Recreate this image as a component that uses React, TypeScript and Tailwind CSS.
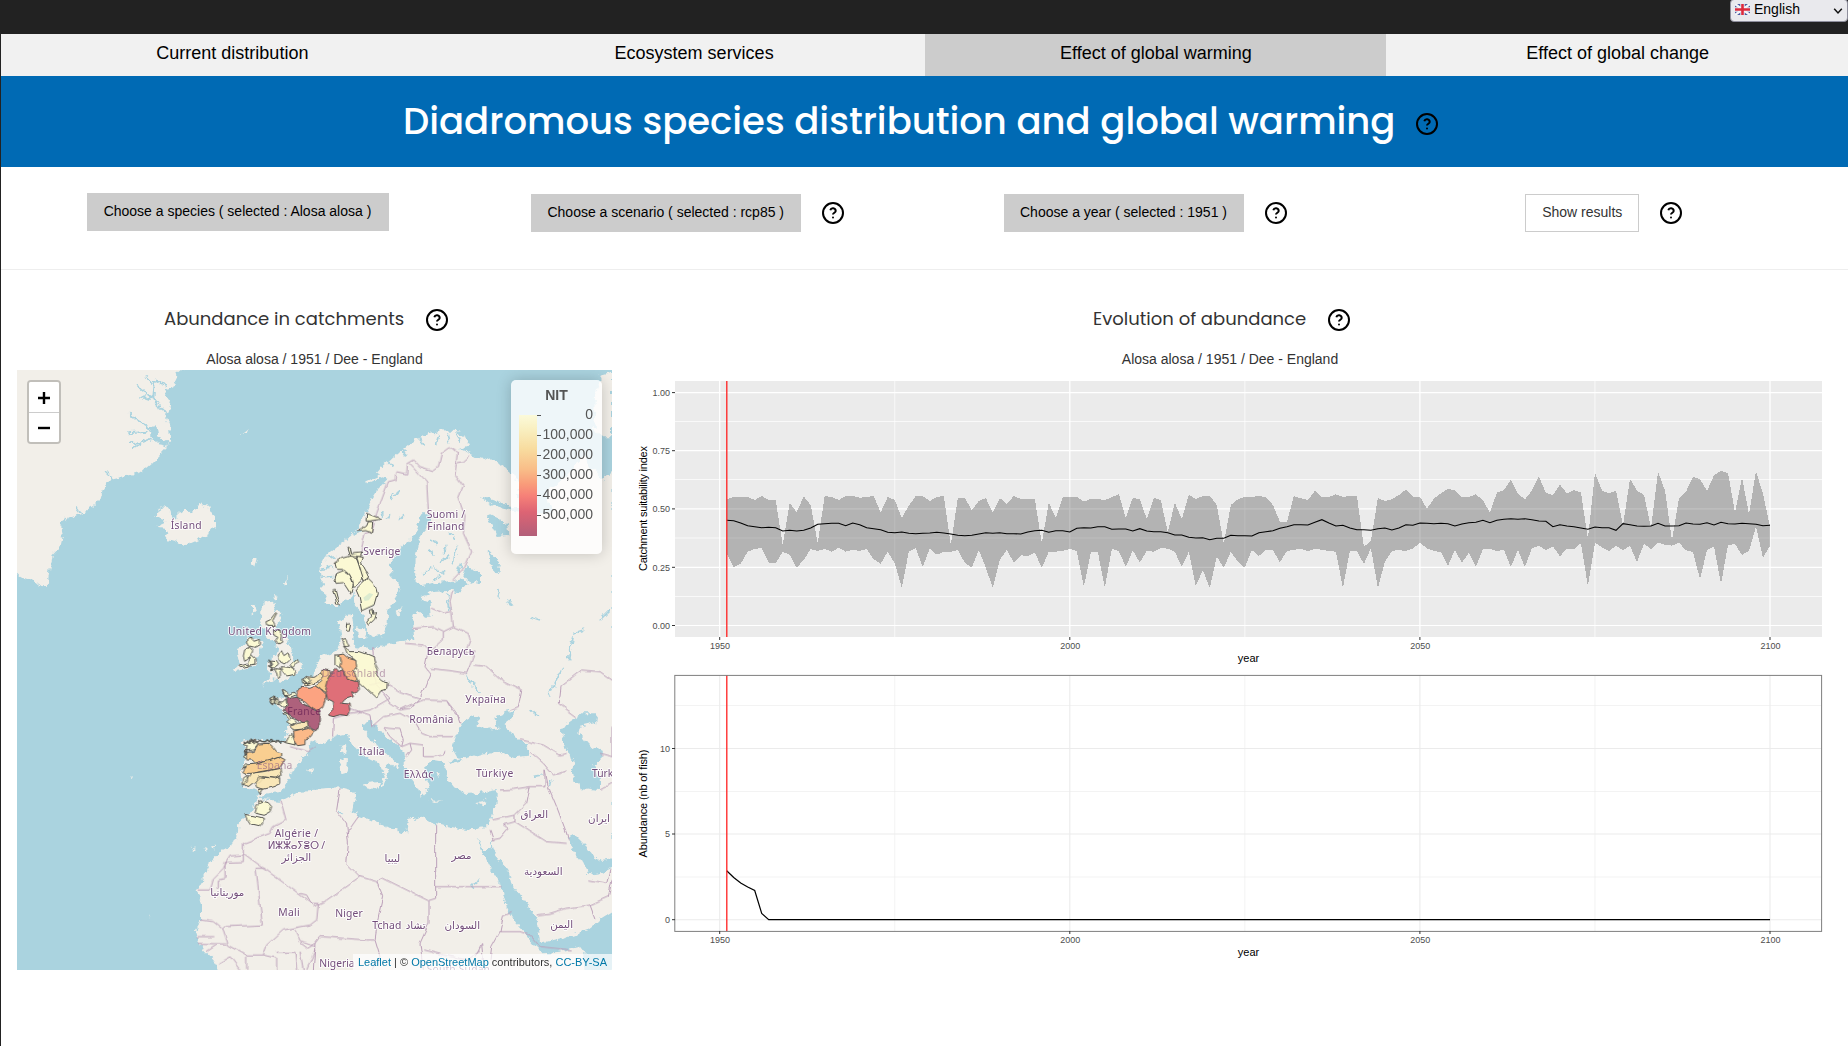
import React from "react";

/* ---------- shared ---------- */

function HelpIcon({ className = "" }: { className?: string }) {
  return (
    <svg
      className={"h-6 w-6 shrink-0 text-black " + className}
      viewBox="0 0 24 24"
      fill="none"
      stroke="currentColor"
      strokeWidth="2"
      strokeLinecap="round"
      strokeLinejoin="round"
    >
      <circle cx="12" cy="12" r="10" />
      <path d="M9.3 9.2a2.75 2.75 0 0 1 5.4 0.7c0 1.7-2.7 2-2.7 3.7" strokeLinecap="butt" />
      <path d="M12 16.6h.01" />
    </svg>
  );
}

const tabs = [
  { label: "Current distribution", active: false },
  { label: "Ecosystem services", active: false },
  { label: "Effect of global warming", active: true },
  { label: "Effect of global change", active: false },
];

function TopBar() {
  return (
    <div className="relative h-[34px] bg-[#222222]">
      <div className="absolute -top-px right-0 flex h-[23px] w-[118px] items-center rounded-[4px] border border-[#8f8f9d] bg-[#e9e9ed] pl-[4px]">
        <svg className="mt-[-2px] h-[11px] w-[15px]" viewBox="0 0 15 11">
          <rect width="15" height="11" rx="1" fill="#4a5a9e" />
          <path d="M0 0L15 11M15 0L0 11" stroke="#f4f4f8" strokeWidth="2.4" />
          <path d="M7.5 0V11M0 5.5H15" stroke="#f4f4f8" strokeWidth="4.4" />
          <path d="M7.5 0V11M0 5.5H15" stroke="#dc2a3c" strokeWidth="2.6" />
        </svg>
        <span className="ml-[4px] mt-[-3px] text-[14px] leading-[16px] text-black">English</span>
        <svg className="ml-auto mr-[4px] mt-[1px] h-[8px] w-[10px]" viewBox="0 0 10 8" fill="none" stroke="#111" strokeWidth="1.5">
          <path d="M1.2 1.8L5 6L8.8 1.8" />
        </svg>
      </div>
    </div>
  );
}

/* ---------- map ---------- */

const land =
  "M975 895L965 850L962 800L980 765L1010 740L1045 715L1065 695L1095 645L1115 600L1140 560L1165 535L1130 520L1150 495L1190 462L1230 430L1270 408L1320 394L1370 396L1400 415L1410 435L1380 447L1420 465L1490 485L1535 518L1560 560L1555 610L1600 628L1640 610L1645 570L1690 540L1730 490L1755 470L1770 500L1806 535L1840 516L1840 2020L660 2020L655 2005L640 1980L610 1950L593 1920L585 1890L603 1860L603 1810L590 1770L610 1735L630 1690L660 1655L690 1640L712 1610L715 1580L735 1550L760 1520L780 1495L777 1476L750 1464L726 1460L722 1420L728 1380L735 1350L725 1326L750 1316L800 1322L856 1324L862 1290L865 1250L850 1235L835 1220L806 1205L815 1193L860 1198L850 1168L870 1180L885 1185L905 1160L912 1145L940 1125L960 1075L985 1060L1010 1052L1025 1010L1016 970L1030 948L1055 938L1068 885L1045 895L1020 915L985 915Z" +
  "M51 200H555L530 220L533 235L520 262L490 270L510 300L503 335L495 345L507 375L511 425L500 445L470 475L455 490L425 515L395 525L330 540L310 565L300 600L280 620L250 640L205 655L180 670L188 700L178 740L155 765L150 800L142 860L125 862L100 840L60 832L40 815V200Z" +
  "M463 650L475 630L492 612L512 635L515 655L532 655L533 630L545 640L555 628L575 640L590 625L600 610L625 618L630 640L645 655L645 680L630 700L600 718L560 735L520 722L493 715L505 700L495 683L472 680L495 670L497 657Z" +
  "M790 908L830 904L820 932L847 936L840 965L825 985L850 1000L868 1030L878 1062L880 1082L905 1085L905 1100L892 1122L850 1144L820 1138L787 1162L815 1125L800 1112L806 1088L826 1068L832 1040L825 1025L800 1010L792 985L782 960L785 925Z" +
  "M745 1015L775 1012L785 1035L772 1070L770 1095L735 1108L703 1114L718 1085L708 1050L730 1040Z" +
  "M756 918L772 908L768 930L755 945ZM822 885L832 888L825 898ZM852 848L863 830L862 850L855 860ZM753 778L770 775L763 803ZM725 402L744 388L738 400Z" +
  "M1805 240L1800 225L1836 215V412L1806 412L1780 380L1785 290Z";

const water =
  "M1050 935L1060 875L1068 920L1085 935L1090 965L1100 985L1112 1008L1150 1005L1163 965L1165 930L1190 895L1200 860L1175 830L1172 790L1200 745L1240 710L1255 670L1265 643L1290 643L1285 665L1275 690L1255 720L1247 770L1245 840L1265 858L1340 845L1385 835L1400 850L1380 877L1350 872L1300 876L1262 888L1275 903L1292 908L1295 950L1275 950L1255 930L1240 945L1240 985L1243 1018L1190 1025L1120 1048L1070 1042L1058 1030L1062 1000L1056 940Z" +
  "M782 1492L800 1480L845 1472L870 1430L885 1400L930 1350L935 1322L970 1330L1020 1307L1045 1302L1055 1330L1080 1360L1110 1377L1140 1392L1155 1430L1142 1455L1150 1460L1165 1420L1155 1395L1175 1392L1190 1410L1196 1395L1160 1362L1130 1340L1110 1310L1092 1290L1092 1268L1115 1266L1133 1280L1150 1305L1195 1335L1210 1355L1215 1400L1230 1430L1245 1450L1255 1475L1280 1480L1285 1460L1275 1430L1270 1405L1300 1380L1330 1385L1340 1410L1345 1440L1365 1465L1400 1482L1440 1478L1490 1470L1490 1510L1478 1540L1468 1578L1440 1580L1400 1590L1350 1580L1305 1572L1265 1550L1225 1560L1218 1598L1200 1602L1150 1575L1075 1545L1055 1535L1065 1495L1060 1475L1020 1465L900 1472L840 1503L790 1498Z" +
  "M1355 1345L1370 1300L1395 1260L1425 1243L1440 1265L1425 1275L1460 1290L1500 1285L1490 1275L1480 1255L1520 1235L1545 1230L1535 1255L1510 1275L1530 1290L1560 1320L1590 1345L1590 1370L1540 1375L1500 1355L1450 1360L1400 1375L1370 1372Z" +
  "M1345 1382L1375 1376L1385 1384L1360 1390Z" +
  "M1685 1290L1700 1270L1745 1240L1790 1240L1785 1270L1740 1280L1735 1300L1750 1315L1775 1345L1800 1350L1810 1370L1795 1385L1780 1390L1800 1440L1800 1470L1750 1465L1720 1445L1715 1410L1725 1390L1700 1350Z" +
  "M1430 1610L1455 1650L1468 1650L1475 1620L1477 1648L1530 1720L1540 1760L1580 1810L1610 1860L1620 1925L1640 1925L1700 1910L1760 1890L1800 1860L1840 1835V1960H1755L1740 1940L1680 1955L1630 1960L1600 1930L1550 1870L1520 1820L1505 1760L1480 1720L1455 1670Z" +
  "M1750 1962L1840 1955V2020H1750Z" +
  "M1705 1610L1725 1605L1760 1640L1790 1682L1840 1675V1700L1800 1720L1765 1725L1750 1690L1720 1650Z" +
  "M1435 588L1480 600L1540 625L1600 620L1640 600L1660 640L1560 640L1480 615ZM1475 645L1520 668L1525 705L1490 708L1462 650Z" +
  "M1400 800L1440 820L1440 845L1410 852L1390 825ZM1462 752L1500 790L1495 822L1475 800ZM1520 900L1545 912L1530 918Z";

const islands =
  "M1022 1330L1038 1330L1040 1360L1028 1365ZM1020 1375L1044 1378L1040 1415L1024 1420ZM1092 1450L1140 1445L1135 1470L1100 1462ZM1285 1500L1325 1504L1300 1506ZM1430 1506L1460 1500L1445 1513ZM920 1410L940 1405L935 1418ZM1070 985L1100 990L1095 1015L1075 1010ZM1190 935L1208 925L1195 950ZM390 1428L402 1426L396 1432ZM574 1640L584 1645L578 1652ZM612 1640L618 1648L610 1650ZM636 1645L648 1625L642 1645ZM448 1850L454 1852L450 1856ZM1265 1495L1275 1465L1262 1470ZM1310 1420L1322 1425L1318 1430Z";

const fjords =
  "M410 260L430 275L460 290L480 325L505 340M440 230L460 250M465 240L460 290L430 300M412 293L440 292M388 340L410 360L440 378L460 410L475 430L505 433M385 400L440 395M390 430L430 425L455 415M395 445L420 430M320 515L335 540M230 620L245 640M463 240L500 262";

const lakes =
  "M1200 570L1185 590M1215 640L1195 660M1180 580L1170 600M1290 745L1300 770M1320 790L1345 770M1360 790L1370 740M1300 800L1330 820M1350 700L1365 720M1385 790L1375 820M1590 950L1620 960M1490 870L1500 890M1720 1010L1710 1050L1705 1080M1690 1100L1660 1160L1645 1190M1400 1120L1430 1170L1445 1180M1595 1230L1620 1250M1440 1730L1420 1755L1412 1762M1115 920L1118 905M1830 930L1800 960M1720 1000L1750 990M1600 1430L1625 1425M1655 1440L1652 1460M1010 1535L1035 1540M1340 880L1350 930M1330 760L1340 740M1290 720L1310 735M1270 820L1290 800M1300 840L1320 825M1170 640L1160 655M1150 640L1140 655";

const borders: { dx: number; dy: number; lines: string[] }[] = [
  {
    dx: 900,
    dy: 0,
    lines: [
      "182,760 195,700 215,695 230,640 265,545 285,540 288,518 320,525 322,492 342,480 360,500 400,512 415,500 425,458 450,440 472,458 465,525 490,560 475,595 495,650 490,700 515,755 495,800 458,840",
      "330,490 380,545 385,635",
      "470,492 490,488 510,470",
      "458,870 450,900 455,935 460,980 430,995 400,980 340,985",
      "395,925 430,940 452,935",
      "460,980 505,1000 510,1020 495,1060 525,1055 510,1095",
      "430,995 430,1020 385,1060",
    ],
  },
  {
    dx: 900,
    dy: 990,
    lines: [
      "218,55 222,100 225,160 270,205 210,240 150,250 100,265 98,320",
      "315,40 370,45 385,60 375,110 390,130 360,205",
      "390,115 450,122 500,130 510,105",
      "520,105 560,110 605,150 665,180 655,230 630,240",
      "210,165 250,155 300,185 360,205 330,235 300,240 270,220 250,190",
      "150,235 210,255 215,290 250,260 300,250 345,275 365,310 390,320 460,320",
      "250,290 300,295 310,330 305,350 270,320 250,290",
      "305,350 330,340 370,345 370,380 400,380 430,375 435,360",
      "330,340 335,360 320,380",
      "300,240 330,225 370,210 440,212 470,250 480,280",
      "440,212 455,240 480,265",
      "660,330 730,345 780,375 800,370",
      "690,365 730,400 760,435 800,420",
      "600,480 640,478 690,470 735,470 735,420 745,470 770,530 800,610 805,630",
      "690,470 680,520 645,555 580,570",
      "645,555 645,575 740,635 800,640",
      "575,630 600,625 625,595 610,585 645,575",
      "570,600 580,630",
      "120,475 110,540 140,580 145,640 140,700 180,740",
      "140,610 175,560",
      "180,740 80,810 40,830 20,795 0,790",
      "180,740 230,755 250,745 385,812 407,805 407,585",
      "407,770 608,770",
      "387,812 387,880 360,940 370,1020",
      "230,755 248,800 235,860 225,930 200,930 60,920 45,940 40,1020",
      "225,930 240,980 215,1020",
      "0,940 20,955 45,940",
      "525,980 545,940 550,990",
      "570,990 575,950 600,905 610,855 635,845",
      "600,905 660,905 690,915 720,950 815,960",
      "865,750 920,760 930,720",
      "710,855 750,850 800,835 870,825 925,800 936,750",
      "870,825 885,865",
      "936,150 900,125 845,120 780,170 775,220 830,260",
      "900,480 936,460",
      "936,290 936,380 900,370",
      "370,960 430,975 500,990 540,960",
    ],
  },
  {
    dx: 0,
    dy: 990,
    lines: [
      "843,515 858,570 820,590 810,610 730,640 730,695 675,697 675,745 655,750 655,775",
      "590,780 630,780 640,745 670,715 690,678 730,675",
      "730,670 935,820 955,820 950,870 930,885 850,900 800,945 790,975 740,975 685,945 670,900 640,875 600,870",
      "795,715 768,715 787,885 680,890 670,900",
      "590,920 640,920",
      "593,940 680,942",
      "885,900 900,935 945,950",
      "790,975 830,985 830,1020",
      "830,967 885,967 890,1020",
      "620,965 650,945",
      "655,1000 690,980 720,1020",
      "740,975 740,1020",
      "900,965 910,1020",
      "920,1020 945,960",
      "870,350 925,365 950,350",
    ],
  },
];

type Label = [string, number, number, number, boolean?];
const labels: Label[] = [
  ["Ísland", 512, 686, 93],
  ["United Kingdom", 684, 1004, 249],
  ["Suomi /", 1280, 653, 115],
  ["Finland", 1282, 689, 111],
  ["Sverige", 1090, 765, 111],
  ["Беларусь", 1280, 1064, 143],
  ["Україна", 1396, 1209, 121],
  ["România", 1228, 1270, 132],
  ["Italia", 1077, 1365, 77],
  ["Ελλάς", 1211, 1435, 89],
  ["Türkiye", 1428, 1430, 112],
  ["Türkmenistan", 1776, 1430, 200],
  ["Algérie /", 824, 1612, 130],
  ["ⵍⵣⵣⴰⵢⴻⵔ /", 803, 1648, 172],
  ["الجزائر", 850, 1684, 78, true],
  ["موريتانيا", 628, 1787, 108, true],
  ["Mali", 835, 1848, 64],
  ["Niger", 1006, 1850, 82],
  ["Tchad", 1117, 1887, 87],
  ["تشاد", 1216, 1887, 62, true],
  ["ليبيا", 1150, 1685, 54, true],
  ["مصر", 1355, 1677, 59, true],
  ["السودان", 1334, 1887, 106, true],
  ["العراق", 1564, 1553, 78, true],
  ["ایران", 1766, 1567, 62, true],
  ["السعودية", 1571, 1725, 118, true],
  ["اليمن", 1650, 1885, 70, true],
  ["Nigeria", 958, 2002, 106],
  ["South Sudan", 1280, 2018, 190],
];

const PALE = "#fcf9d2";
const CREAM = "#fae6b2";
const AMBER = "#f9ca86";
const ORANGE = "#fcb27d";
const CORAL = "#fd9a75";
const RED = "#dd5f6b";
const MAROON = "#a65170";

const westCatchments: [string, string][] = [
  [MAROON, "232,290 246,294 262,292 275,307 300,318 315,332 328,330 328,375 318,392 304,386 292,372 265,360 240,345 222,332 230,320"],
  [CORAL, "258,272 275,262 300,265 318,257 330,265 345,280 345,300 338,320 322,332 300,318 285,303 262,292"],
  [RED, "350,245 360,230 365,215 375,205 385,215 400,208 408,225 420,240 445,245 448,265 435,280 425,275 430,290 405,298 395,310 420,312 422,330 415,347 390,344 370,350 352,345 372,325 370,305 350,295 345,275"],
  [ORANGE, "385,165 400,162 415,175 440,182 440,200 430,215 443,235 435,245 412,238 405,215 390,198"],
  [PALE, "375,165 385,165 392,185 388,205 375,195"],
  [PALE, "405,138 420,155 450,155 470,162 490,170 495,190 505,210 500,225 515,240 532,245 530,265 512,270 497,293 445,245 430,215 440,200 438,182 415,165"],
  [AMBER, "325,225 338,208 360,212 362,225 355,240 350,260 345,275 330,265 318,257 335,245"],
  [CREAM, "280,245 290,230 310,232 335,215 340,228 325,245 300,255 285,258"],
  [PALE, "276,240 290,228 300,238 290,250 278,252"],
  [ORANGE, "248,397 300,385 313,395 300,412 285,418 285,434 262,437 250,420"],
  [CREAM, "240,378 260,370 295,366 298,380 280,390 250,393"],
  [PALE, "243,403 250,420 256,435 226,428 235,410"],
  [PALE, "202,305 218,306 228,296 231,318 222,322"],
  [PALE, "180,294 190,290 196,300 204,296 206,312 196,306 186,308"],
  [PALE, "220,268 230,272 236,284 250,276 258,285 240,292 226,286"],
  [PALE, "222,340 236,342 240,352 254,358 260,366 244,374 230,366 238,358"],
  [AMBER, "105,458 130,455 145,432 175,430 190,442 200,455 215,458 215,470 185,478 180,490 160,485 140,492 130,480 110,480"],
  [AMBER, "95,515 110,495 140,492 165,485 185,480 205,472 225,482 218,492 205,506 180,510 150,515 130,520 105,520"],
  [CREAM, "122,520 160,515 210,505 213,525 195,535 160,530 150,545 130,548 115,560 100,550 112,535"],
  [CREAM, "135,548 150,530 190,535 212,530 212,550 190,560 160,568 140,562"],
  [PALE, "98,432 112,428 120,420 145,430 130,450 108,452 112,440"],
  [PALE, "100,470 112,462 112,478"],
  [PALE, "96,505 108,490 114,496"],
  [PALE, "100,535 112,525 112,545 100,556"],
  [PALE, "145,612 155,603 175,608 185,620 180,635 160,646 135,640 140,622"],
  [PALE, "108,643 140,650 160,655 158,668 148,680 125,675 115,660"],
  [PALE, "147,600 156,600 154,610 146,608"],
  [PALE, "145,570 160,566 152,582"],
  [PALE, "168,65 180,60 197,38 200,40 188,62 196,76 170,76"],
  [PALE, "194,92 210,90 214,108 212,120 216,126 205,132 198,122 204,112 192,106"],
  [PALE, "182,180 200,182 206,192 190,205 182,198 188,190"],
  [PALE, "205,165 214,155 222,170 236,160 240,180 226,192 208,182"],
  [PALE, "240,196 262,178 266,186 248,206"],
  [PALE, "214,200 238,202 256,212 250,224 230,228 220,216"],
  [PALE, "196,206 214,208 214,230 206,238 204,222"],
  [PALE, "112,126 124,114 132,124 148,118 148,134 134,142 118,138"],
  [PALE, "104,150 120,142 128,152 122,172 104,184 100,168"],
  [PALE, "124,164 138,176 138,192 114,196"],
  [PALE, "90,198 112,192 116,198 94,203"],
  [PALE, "396,118 408,116 412,130 418,138 404,140 400,128"],
];

const northCatchments: string[] = [
  "200,640 245,657 210,663 198,663",
  "205,665 218,665 215,700 198,692 175,694 200,678",
  "141,742 147,738 152,762 185,758 182,770 150,772",
  "105,790 125,775 150,768 168,772 175,790 190,820 188,840 170,858 160,862 158,840 145,818 125,808 110,808",
  "105,840 110,820 130,812 150,825 160,850 152,882 142,866 130,848 108,850",
  "178,860 205,835 225,855 232,880 222,915 185,932 178,895 168,872",
  "170,768 190,772 184,790 206,830 192,846 178,800",
  "208,930 216,928 218,942 230,940 224,958 205,975 200,967 212,952",
  "98,870 106,868 118,915 110,915 106,890",
  "140,970 152,968 148,990 138,990",
];

function MapDrawing() {
  return (
    <svg className="block h-[600px] w-[595px] bg-[#aad3df]" viewBox="51 210 1785 1800">
      <defs>
        <filter id="coast" x="-2%" y="-2%" width="104%" height="104%">
          <feTurbulence type="fractalNoise" baseFrequency="0.05" numOctaves="3" seed="4" result="n" />
          <feDisplacementMap in="SourceGraphic" in2="n" scale="24" xChannelSelector="R" yChannelSelector="G" />
        </filter>
        <filter id="border" x="-2%" y="-2%" width="104%" height="104%">
          <feTurbulence type="fractalNoise" baseFrequency="0.03" numOctaves="2" seed="9" result="n" />
          <feDisplacementMap in="SourceGraphic" in2="n" scale="13" xChannelSelector="R" yChannelSelector="G" />
        </filter>
      </defs>
      <g filter="url(#coast)">
        <path d={land} fill="#f2efe9" />
        <path d={water} fill="#aad3df" />
        <path d={islands} fill="#f2efe9" />
        <path d="M1300 545L1290 555M1160 520L1100 548M1190 490L1140 505" stroke="#f2efe9" strokeWidth="7" />
        <path
          d="M1010 770L980 775M1000 800L965 805M1000 830L965 835M1090 690L1060 700M1180 500L1160 480M1220 470L1205 445M1270 440L1260 415M1310 430L1315 400M1350 430L1345 400M1380 425L1370 400"
          stroke="#aad3df"
          strokeWidth="5"
        />
        <path d={fjords} fill="none" stroke="#aad3df" strokeWidth="6" />
        <path d="M458 380L465 415L505 433" fill="none" stroke="#aad3df" strokeWidth="16" />
        <path d={lakes} fill="none" stroke="#aad3df" strokeWidth="5" />
      </g>
      <g filter="url(#border)" fill="none" stroke="#bb9fb9" strokeWidth="3">
        {borders.map((set, s) => (
          <g key={s} transform={`translate(${set.dx} ${set.dy})`}>
            {set.lines.map((pts, i) => (
              <polyline key={i} points={pts} />
            ))}
          </g>
        ))}
      </g>
      <g fontSize="31" fill="#734d7b" stroke="#ffffff" strokeOpacity="0.8" strokeWidth="6" strokeLinejoin="round">
        {labels.map(([text, x, y, w, rtl]) => (
          <text
            key={text}
            x={rtl ? x + w / 2 : x}
            y={y}
            textAnchor={rtl ? "middle" : "start"}
            textLength={rtl ? undefined : w}
            className="font-['Noto_Sans','DejaVu_Sans',sans-serif] [paint-order:stroke]"
          >
            {text}
          </text>
        ))}
      </g>
      <g fillOpacity="0.9" stroke="#555550" strokeWidth="3" strokeLinejoin="round" filter="url(#border)">
        <g transform="translate(630 900)">
          {westCatchments.map(([fill, pts], i) => (
            <polygon key={i} points={pts} fill={fill} />
          ))}
          <path
            d="M98 425l8 6l4 -8l8 8l4 -10l8 6l4 -6l8 6l8 -6l6 4h10l6 -6l6 6l6 -4l6 6h8l6 -6l6 6l8 -4l8 4M104 455l8 -4l2 8l-8 6zM178 296l10 4l6 -8l4 16M184 304l8 8M220 270l6 20l8 -4M176 176l8 14l-8 8l10 6l-4 8l12 -4M276 236l14 14l12 -4M120 430l8 -6l6 8M160 430h20l14 -4"
            fill="none"
            strokeWidth="4"
          />
        </g>
        <g transform="translate(900 0)">
          {northCatchments.map((pts, i) => (
            <polygon key={i} points={pts} fill={PALE} />
          ))}
        </g>
      </g>
      <path d="M1090 893l18 -14l12 4l-14 18l-12 2z" fill="#dcebcf" />
      <g fontSize="31" className="font-['Noto_Sans',sans-serif]">
        <text x="862" y="1245" textLength="101" fill="#6b2456" fillOpacity="0.75">
          France
        </text>
        <text x="770" y="1408" textLength="107" fill="#8a5a80" fillOpacity="0.6">
          España
        </text>
        <text x="965" y="1131" textLength="192" fill="#8a5a80" fillOpacity="0.55">
          Deutschland
        </text>
      </g>
    </svg>
  );
}

function MapPanel() {
  return (
    <div className="relative h-[600px] w-[595px] overflow-hidden">
      <MapDrawing />
      <div className="absolute left-[10px] top-[10px] flex h-[64px] w-[34px] flex-col rounded-[4px] border-2 border-black/20 bg-clip-padding">
        <div className="flex h-[30px] items-center justify-center rounded-t-[2px] bg-white">
          <svg className="mt-[2px] h-3 w-3" viewBox="0 0 12 12" stroke="#000" strokeWidth="2.4">
            <path d="M0 6H12M6 0V12" />
          </svg>
        </div>
        <div className="flex h-[30px] flex-1 items-center justify-center rounded-b-[2px] border-t border-[#cccccc] bg-white">
          <svg className="mt-px h-3 w-3" viewBox="0 0 12 12" stroke="#000" strokeWidth="2.4">
            <path d="M0 6H12" />
          </svg>
        </div>
      </div>
      <div className="absolute right-[10px] top-[10px] h-[174px] w-[91px] rounded-[5px] bg-white/80 px-2 pt-[6px] text-[#555555] shadow-[0_0_15px_rgba(0,0,0,0.2)]">
        <div className="text-center text-[14px] font-bold leading-[19px]">NIT</div>
        <div className="mt-[-1px] flex">
          <div className="mt-[11px] h-[121px] w-[18px] bg-[linear-gradient(#fbfada_0%,#f9efc0_12%,#f8dc9f_28%,#f9bd88_45%,#f99c7a_57%,#f68078_67%,#dd6474_80%,#b25f79_100%)]" />
          <div className="mt-[11px] flex w-[4px] flex-col gap-[19px]">
            {[0, 1, 2, 3, 4, 5].map((i) => (
              <div key={i} className="h-px bg-[#555555]" />
            ))}
          </div>
          <div className="flex flex-1 flex-col pr-px text-right text-[14px] leading-[20px]">
            {["0", "100,000", "200,000", "300,000", "400,000", "500,000"].map((v) => (
              <span key={v}>{v}</span>
            ))}
          </div>
        </div>
      </div>
      <div className="absolute bottom-0 right-0 h-[16px] whitespace-nowrap bg-white/70 px-[5px] text-[11px] leading-[16px] text-[#333333]">
        <span className="text-[#0078a8]">Leaflet</span> | © <span className="text-[#0078a8]">OpenStreetMap</span> contributors,{" "}
        <span className="text-[#0078a8]">CC-BY-SA</span>
      </div>
    </div>
  );
}

/* ---------- charts ---------- */

/* Heights are thirds of a pixel below the top of the drawing, one entry a year from 1951. */
const upper = [
  388, 381, 381, 381, 390, 378, 390, 390, 525, 398, 427, 379, 405, 519, 378, 381, 390, 378, 378, 383, 381, 378, 427, 381, 390, 444,
  407, 378, 378, 393, 381, 378, 525, 384, 384, 420, 393, 384, 427, 384, 402, 378, 387, 387, 387, 519, 398, 444, 381, 381, 381, 395,
  387, 387, 390, 382, 372, 444, 383, 388, 447, 384, 390, 487, 398, 447, 374, 387, 378, 378, 405, 521, 405, 388, 381, 381, 378, 382,
  405, 455, 456, 378, 385, 390, 362, 381, 381, 373, 381, 378, 378, 530, 513, 384, 393, 388, 375, 359, 380, 380, 416, 386, 370, 357,
  360, 381, 381, 373, 391, 427, 368, 360, 329, 372, 388, 362, 320, 368, 375, 344, 370, 360, 367, 507, 308, 362, 369, 363, 466, 326,
  362, 375, 473, 305, 362, 511, 385, 365, 320, 327, 363, 316, 302, 309, 427, 322, 433, 303, 372, 470,
];
const lower = [
  550, 591, 581, 545, 537, 534, 578, 580, 545, 555, 593, 570, 537, 543, 537, 545, 533, 545, 539, 543, 537, 568, 581, 545, 580, 654,
  545, 535, 591, 535, 554, 545, 545, 540, 578, 593, 540, 593, 654, 570, 539, 578, 556, 558, 548, 593, 545, 545, 542, 537, 543, 651,
  547, 545, 654, 537, 543, 591, 541, 578, 542, 545, 534, 536, 545, 591, 545, 648, 600, 654, 560, 593, 545, 575, 593, 540, 558, 540,
  540, 577, 543, 539, 537, 543, 537, 539, 543, 545, 654, 542, 543, 582, 535, 654, 575, 543, 540, 543, 536, 518, 535, 543, 546, 588,
  540, 578, 548, 591, 538, 537, 543, 540, 591, 540, 591, 535, 527, 540, 529, 559, 536, 538, 520, 648, 518, 532, 543, 528, 540, 528,
  576, 521, 537, 518, 524, 527, 518, 541, 546, 628, 540, 530, 642, 525, 522, 555, 542, 470, 563, 528,
];
const mean = [
  451, 452, 459, 467, 470, 473, 472, 473, 483, 481, 483, 481, 474, 463, 461, 460, 460, 467, 459, 464, 473, 476, 479, 487, 488, 486,
  490, 491, 490, 489, 487, 489, 492, 496, 497, 496, 492, 488, 490, 488, 491, 491, 492, 486, 482, 481, 487, 482, 482, 486, 475, 473,
  474, 470, 470, 478, 477, 477, 483, 476, 483, 485, 485, 488, 495, 495, 502, 504, 503, 509, 505, 505, 496, 497, 497, 498, 488, 485,
  482, 475, 470, 464, 464, 465, 457, 449, 459, 468, 466, 474, 479, 479, 481, 476, 474, 480, 474, 464, 466, 459, 460, 461, 460, 461,
  468, 462, 458, 457, 451, 458, 451, 448, 446, 448, 446, 449, 453, 454, 470, 464, 468, 470, 474, 478, 471, 473, 473, 481, 461, 464,
  468, 469, 468, 460, 468, 468, 467, 459, 462, 463, 458, 465, 457, 461, 462, 460, 461, 463, 467, 466,
];

const xOf = (year: number) => 719.7 + (year - 1950) * 7.002;
const pts = (values: number[]) => values.map((v, i) => `${xOf(1951 + i).toFixed(1)},${(370 + v / 3).toFixed(1)}`);

function Charts() {
  const ribbon = [...pts(upper), ...pts(lower).reverse()].join(" ");
  return (
    <svg
      className="block h-[595px] w-[1200px] font-['Liberation_Sans',Arial,sans-serif]"
      viewBox="630 375 1200 595"
      fontSize="9"
      fill="#4d4d4d"
    >
      <rect x="675" y="381" width="1147" height="256" fill="#ebebeb" />
      <g stroke="#ffffff">
        {[421.5, 479.5, 538, 596.5].map((y) => (
          <line key={y} x1="675" x2="1822" y1={y} y2={y} strokeWidth="0.7" />
        ))}
        {[1975, 2025, 2075].map((yr) => (
          <line key={yr} x1={xOf(yr)} x2={xOf(yr)} y1="381" y2="637" strokeWidth="0.7" />
        ))}
        {[392.6, 450.7, 508.9, 567.3, 625.5].map((y) => (
          <line key={y} x1="675" x2="1822" y1={y} y2={y} strokeWidth="1.2" />
        ))}
        {[1950, 2000, 2050, 2100].map((yr) => (
          <line key={yr} x1={xOf(yr)} x2={xOf(yr)} y1="381" y2="637" strokeWidth="1.3" />
        ))}
      </g>
      <polygon points={ribbon} fill="#333333" fillOpacity="0.3" shapeRendering="crispEdges" />
      <polyline points={pts(mean).join(" ")} fill="none" stroke="#000000" strokeWidth="1.1" />
      <line x1="726.8" x2="726.8" y1="381" y2="637" stroke="#ff2020" strokeWidth="1.3" />
      {[
        ["1.00", 392.6],
        ["0.75", 450.7],
        ["0.50", 508.9],
        ["0.25", 567.3],
        ["0.00", 625.5],
      ].map(([t, y]) => (
        <g key={t}>
          <line x1="672" x2="675" y1={y} y2={y} stroke="#333333" />
          <text x="670" y={Number(y) + 3.2} textAnchor="end">
            {t}
          </text>
        </g>
      ))}

      <g stroke="#ebebeb">
        {[705.5, 791.5, 877].map((y) => (
          <line key={y} x1="675" x2="1822" y1={y} y2={y} strokeWidth="0.6" />
        ))}
        {[1975, 2025, 2075].map((yr) => (
          <line key={yr} x1={xOf(yr)} x2={xOf(yr)} y1="675" y2="931" strokeWidth="0.6" />
        ))}
        {[748.5, 834, 919.7].map((y) => (
          <line key={y} x1="675" x2="1822" y1={y} y2={y} strokeWidth="1.1" />
        ))}
        {[1950, 2000, 2050, 2100].map((yr) => (
          <line key={yr} x1={xOf(yr)} x2={xOf(yr)} y1="675" y2="931" strokeWidth="1.1" />
        ))}
      </g>
      <polyline
        points={`${xOf(1951)},870.7 ${xOf(1952)},877.5 ${xOf(1953)},883 ${xOf(1954)},887 ${xOf(1955)},890.5 ${xOf(1956)},913.5 ${xOf(1957)},919.6 ${xOf(2100)},919.6`}
        fill="none"
        stroke="#000000"
        strokeWidth="1.2"
      />
      <line x1="726.8" x2="726.8" y1="675" y2="931" stroke="#ff2020" strokeWidth="1.3" />
      <rect x="674.8" y="675.4" width="1146.8" height="256" fill="none" stroke="#7f7f7f" strokeWidth="1" />
      {[
        ["10", 748.5],
        ["5", 834],
        ["0", 919.7],
      ].map(([t, y]) => (
        <g key={t}>
          <line x1="672" x2="675" y1={y} y2={y} stroke="#333333" />
          <text x="670" y={Number(y) + 3.2} textAnchor="end">
            {t}
          </text>
        </g>
      ))}

      {[1950, 2000, 2050, 2100].map((yr) => (
        <g key={yr} textAnchor="middle">
          <line x1={xOf(yr)} x2={xOf(yr)} y1="637" y2="640" stroke="#333333" />
          <text x={xOf(yr) + 0.4} y="649">
            {yr}
          </text>
          <line x1={xOf(yr)} x2={xOf(yr)} y1="931" y2="934" stroke="#333333" />
          <text x={xOf(yr) + 0.4} y="943">
            {yr}
          </text>
        </g>
      ))}
      <g fontSize="11" fill="#000000" textAnchor="middle">
        <text x="1248.5" y="662">
          year
        </text>
        <text x="1248.5" y="956">
          year
        </text>
        <text transform="translate(647 508.5) rotate(-90)" textLength="125">
          Catchment suitability index
        </text>
        <text transform="translate(647 803.5) rotate(-90)" textLength="108">
          Abundance (nb of fish)
        </text>
      </g>
    </svg>
  );
}

/* ---------- page ---------- */

const choice = "flex h-[38px] items-center justify-center bg-[#cccccc] text-[14px] text-black";
const geometric = "font-['Poppins','Inter',sans-serif] [font-feature-settings:'cv11']";

export default function App() {
  return (
    <div className="h-[1046px] w-[1848px] overflow-hidden border-l border-[#222222] bg-white font-['Liberation_Sans',Arial,sans-serif]">
      <TopBar />
      <nav className="grid h-[42px] grid-cols-4 bg-[#f1f1f1]">
        {tabs.map((t) => (
          <div
            key={t.label}
            className={"flex justify-center pl-px pt-[7px] text-[18px] leading-[24px] text-black " + (t.active ? "bg-[#cccccc]" : "")}
          >
            {t.label}
          </div>
        ))}
      </nav>
      <header className="flex h-[91px] items-center bg-[#006ab4] pl-[402px]">
        <h1 className={"mt-[-1px] w-[993px] whitespace-nowrap text-[37px] font-medium leading-[46px] text-white " + geometric}>
          Diadromous species distribution and global warming
        </h1>
        <HelpIcon className="ml-[19px] mt-[5px]" />
      </header>
      <section className="grid h-[103px] grid-cols-4 items-start border-b border-[#eeeeee] pt-[27px]">
        <div className="flex pl-[86px] pt-0">
          <button className={choice + " mt-[-1px] w-[302px] pb-[2px] pr-px"}>Choose a species ( selected : Alosa alosa )</button>
        </div>
        <div className="flex items-center pl-[68px]">
          <button className={choice + " w-[270px] pb-px"}>Choose a scenario ( selected : rcp85 )</button>
          <HelpIcon className="ml-5" />
        </div>
        <div className="flex items-center pl-[79px]">
          <button className={choice + " w-[240px] pb-px"}>Choose a year ( selected : 1951 )</button>
          <HelpIcon className="ml-5" />
        </div>
        <div className="flex items-center pl-[139px]">
          <button className="flex h-[38px] w-[114px] items-center justify-center border border-[#cccccc] bg-white pb-px text-[14px] text-[#333333]">
            Show results
          </button>
          <HelpIcon className="ml-5" />
        </div>
      </section>
      <main className="flex pt-[38px]">
        <section className="w-[611px] pl-4">
          <div className="flex h-[24px] items-center pl-[147px]">
            <h2 className={"mt-[-2px] w-[240px] whitespace-nowrap text-[18px] leading-[24px] text-[#333333] " + geometric}>
              Abundance in catchments
            </h2>
            <HelpIcon className="ml-[21px]" />
          </div>
          <p className="mt-[17px] text-center text-[14px] leading-[20px] text-[#333333]">Alosa alosa / 1951 / Dee - England</p>
          <div className="mt-[1px]">
            <MapPanel />
          </div>
        </section>
        <section className="w-[1236px] pl-[18px]">
          <div className="flex h-[24px] items-center pl-[463px]">
            <h2 className={"mt-[-2px] w-[214px] whitespace-nowrap text-[18px] leading-[24px] text-[#333333] " + geometric}>
              Evolution of abundance
            </h2>
            <HelpIcon className="ml-[20px]" />
          </div>
          <p className="mt-[17px] w-[1200px] text-center text-[14px] leading-[20px] text-[#333333]">Alosa alosa / 1951 / Dee - England</p>
          <div className="mt-[6px]">
            <Charts />
          </div>
        </section>
      </main>
    </div>
  );
}
